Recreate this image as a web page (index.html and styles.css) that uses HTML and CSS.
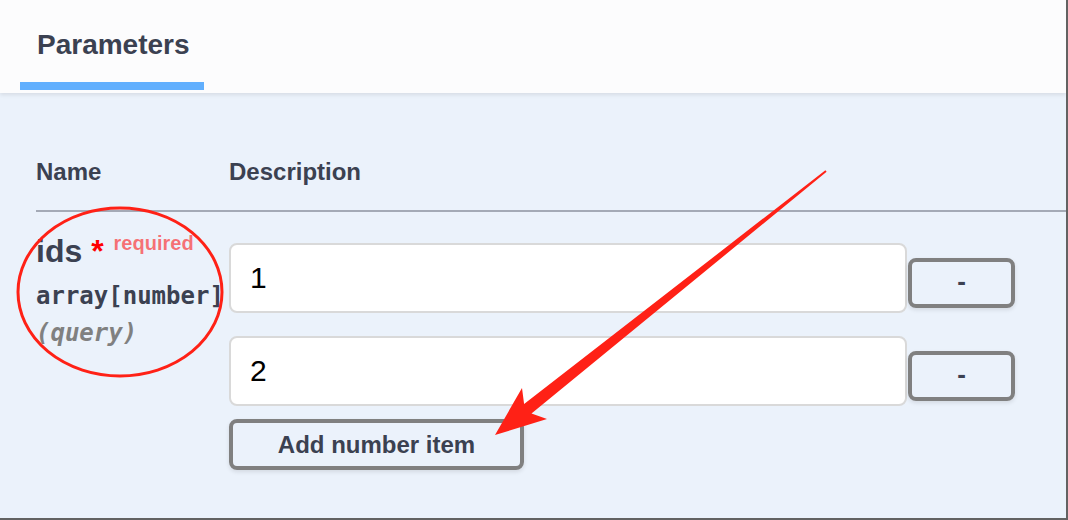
FILE: index.html
```html
<!DOCTYPE html>
<html lang="en">
<head>
<meta charset="utf-8">
<title>Parameters</title>
<link rel="stylesheet" href="styles.css">
</head>
<body>
<div class="opblock">
  <div class="section-header">
    <div class="tab"><h4 class="tab-title">Parameters</h4></div>
  </div>
  <div class="params">
    <div class="params-head">
      <div class="col-name">Name</div>
      <div class="col-desc">Description</div>
    </div>
    <div class="param-row">
      <div class="param-name-cell">
        <div class="param-name">ids<span class="star">&nbsp;*</span><span class="required">required</span></div>
        <div class="param-type">array[number]</div>
        <div class="param-in">(query)</div>
      </div>
      <div class="param-desc-cell">
        <div class="item">
          <input class="item-input" type="text" value="1">
          <button class="btn btn-remove" type="button">-</button>
        </div>
        <div class="item">
          <input class="item-input" type="text" value="2">
          <button class="btn btn-remove" type="button">-</button>
        </div>
        <button class="btn btn-add" type="button">Add number item</button>
      </div>
    </div>
  </div>
  <svg class="annot" width="1068" height="520" viewBox="0 0 1068 520" aria-hidden="true">
    <ellipse cx="120" cy="292" rx="102" ry="84" fill="none" stroke="#ff2116" stroke-width="3"/>
    <polygon fill="#ff2116" points="825.4,170.2 524.1,404.1 522,388 495,435 547,419 531.5,413.5 826.6,171.8"/>
  </svg>
</div>
</body>
</html>
```
FILE: styles.css
```css
* { box-sizing: border-box; }

html, body {
  margin: 0;
  padding: 0;
  background: #ebf2fb;
}

body {
  font-family: "Liberation Sans", Arial, sans-serif;
  color: #3b4151;
}

.opblock {
  position: relative;
  width: 1068px;
  height: 520px;
  background: #ebf2fb;
  border-right: 2px solid #626262;
  border-bottom: 2px solid #626262;
  overflow: hidden;
}

.section-header {
  height: 93px;
  background: #fcfcfd;
  box-shadow: 0 2px 4px rgba(0, 0, 0, 0.09);
  display: flex;
  align-items: flex-end;
  padding-left: 20px;
  position: relative;
  z-index: 1;
}

.tab {
  padding: 31px 14px 23px 17px;
  border-bottom: 8px solid #61affe;
  margin-bottom: 3px;
}

.tab-title {
  margin: 0;
  font-size: 28px;
  line-height: 28px;
  font-weight: 700;
  color: #3b4151;
}

.params {
  margin-left: 36px;
  padding-top: 67px;
}

.params-head {
  display: grid;
  grid-template-columns: 193px 1fr;
  font-size: 24px;
  line-height: 24px;
  font-weight: 700;
  padding-bottom: 26px;
  border-bottom: 2px solid #a4aab6;
}

.param-row {
  display: grid;
  grid-template-columns: 193px 1fr;
}

.param-name-cell {
  padding-top: 19px;
}

.param-name {
  font-size: 32px;
  line-height: 40px;
  font-weight: 700;
  white-space: nowrap;
}

.star {
  color: #ff0000;
}

.required {
  position: relative;
  top: -12px;
  padding: 0 10px;
  font-size: 20px;
  color: rgba(255, 0, 0, 0.55);
}

.param-type {
  font-family: "DejaVu Sans Mono", monospace;
  font-size: 24px;
  line-height: 28px;
  font-weight: 700;
  padding: 7px 0 9px;
  white-space: nowrap;
}

.param-in {
  font-family: "DejaVu Sans Mono", monospace;
  font-size: 24px;
  line-height: 28px;
  font-weight: 700;
  font-style: italic;
  color: #808080;
}

.param-desc-cell {
  padding-top: 31px;
  display: flex;
  flex-direction: column;
  align-items: flex-start;
}

.item {
  display: flex;
  align-items: flex-start;
  margin-bottom: 23px;
}

.item:nth-of-type(2) {
  margin-bottom: 13px;
}

.item-input {
  width: 678px;
  height: 70px;
  margin: 0;
  border: 2px solid #d9d9d9;
  border-radius: 8px;
  background: #ffffff;
  padding: 0 19px;
  font-family: "Liberation Sans", Arial, sans-serif;
  font-size: 30px;
  color: #000000;
  outline: none;
}

.btn {
  margin: 0;
  border: 4px solid #808080;
  border-radius: 8px;
  background: transparent;
  box-shadow: 0 2px 4px rgba(0, 0, 0, 0.1);
  font-family: "Liberation Sans", Arial, sans-serif;
  font-size: 24px;
  font-weight: 700;
  color: #3b4151;
  padding: 0;
  line-height: 24px;
}

.btn-remove {
  width: 107px;
  height: 50px;
  margin-left: 1px;
  margin-top: 15px;
  padding-bottom: 4px;
  font-size: 26px;
}

.btn-add {
  width: 295px;
  height: 51px;
}

.annot {
  position: absolute;
  left: 0;
  top: 0;
  pointer-events: none;
  z-index: 2;
}
```
